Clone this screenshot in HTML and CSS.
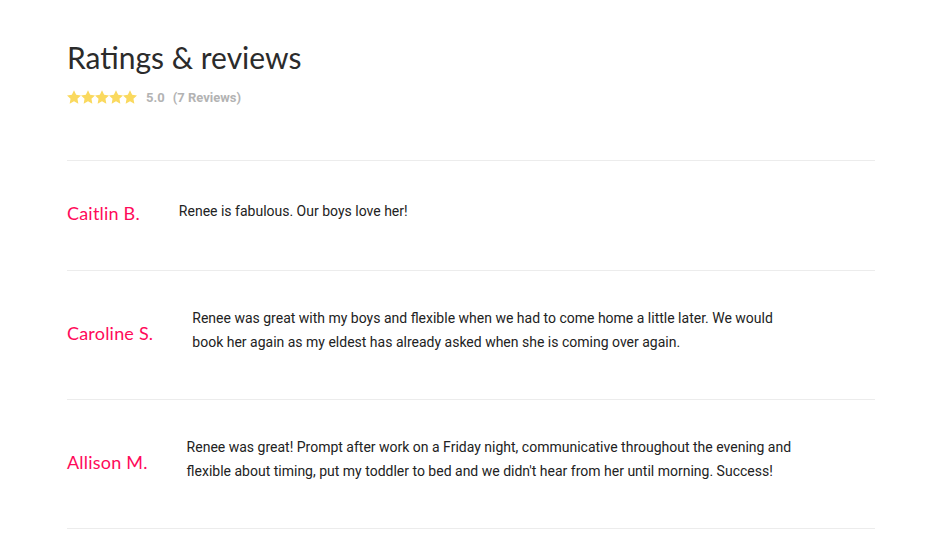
FILE: index.html
```html
<!DOCTYPE html>
<html>
<head>
<meta charset="utf-8">
<link rel="stylesheet" href="styles.css">
</head>
<body>
<div class="page">
  <h1 class="title">Ratings &amp; reviews</h1>
  <div class="summary">
    <span class="stars">
      <svg viewBox="0 0 24 24"><path d="M12 .6l3.67 7.57 8.33 1.15-6.06 5.83 1.48 8.28L12 19.45l-7.42 3.97 1.48-8.28L0 9.32l8.33-1.15z"/></svg>
      <svg viewBox="0 0 24 24"><path d="M12 .6l3.67 7.57 8.33 1.15-6.06 5.83 1.48 8.28L12 19.45l-7.42 3.97 1.48-8.28L0 9.32l8.33-1.15z"/></svg>
      <svg viewBox="0 0 24 24"><path d="M12 .6l3.67 7.57 8.33 1.15-6.06 5.83 1.48 8.28L12 19.45l-7.42 3.97 1.48-8.28L0 9.32l8.33-1.15z"/></svg>
      <svg viewBox="0 0 24 24"><path d="M12 .6l3.67 7.57 8.33 1.15-6.06 5.83 1.48 8.28L12 19.45l-7.42 3.97 1.48-8.28L0 9.32l8.33-1.15z"/></svg>
      <svg viewBox="0 0 24 24"><path d="M12 .6l3.67 7.57 8.33 1.15-6.06 5.83 1.48 8.28L12 19.45l-7.42 3.97 1.48-8.28L0 9.32l8.33-1.15z"/></svg>
    </span>
    <span class="score">5.0</span>
    <span class="count">(7 Reviews)</span>
  </div>
  <div class="reviews">
    <div class="review">
      <div class="name">Caitlin B.</div>
      <p class="text">Renee is fabulous. Our boys love her!</p>
    </div>
    <div class="review">
      <div class="name">Caroline S.</div>
      <p class="text">Renee was great with my boys and flexible when we had to come home a little later. We would book her again as my eldest has already asked when she is coming over again.</p>
    </div>
    <div class="review">
      <div class="name">Allison M.</div>
      <p class="text">Renee was great! Prompt after work on a Friday night, communicative throughout the evening and flexible about timing, put my toddler to bed and we didn't hear from her until morning. Success!</p>
    </div>
  </div>
</div>
</body>
</html>
```
FILE: styles.css
```css
* { box-sizing: border-box; }
html, body { margin: 0; padding: 0; background: #fff; }
body { font-family: Roboto, "Liberation Sans", sans-serif; }
.page {
  width: 808px;
  margin-left: 67px;
  padding-top: 38px;
}
.title {
  margin: 0;
  font-family: Lato, "Open Sans", sans-serif;
  font-weight: 400;
  font-size: 30px;
  line-height: 38px;
  color: #2b2b2b;
}
.summary {
  display: flex;
  align-items: center;
  margin-top: 13px;
  height: 16px;
  font-size: 13px;
  font-weight: 700;
  color: #b3b3b3;
}
.stars { display: flex; margin-right: 9px; }
.stars svg { width: 14px; height: 14px; fill: #fad95e; display: block; }
.score { margin-right: 8px; }
.reviews {
  margin-top: 55px;
  border-top: 1px solid #ececec;
}
.review {
  display: flex;
  align-items: center;
  gap: 39px;
  padding: 35px 0 43px;
  border-bottom: 1px solid #ececec;
}
.name {
  font-family: Lato, "Open Sans", sans-serif;
  font-size: 18px;
  line-height: 28px;
  padding-top: 3px;
  letter-spacing: 0.2px;
  color: #ff0a5a;
  white-space: nowrap;
}
.text {
  margin: 0 0 2px;
  max-width: 610px;
  font-size: 14px;
  line-height: 24px;
  color: #222;
}
```
